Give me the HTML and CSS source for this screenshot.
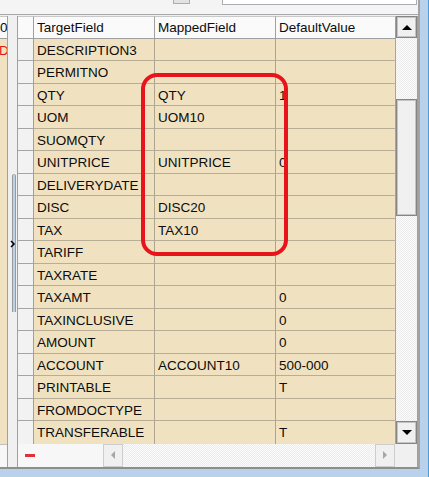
FILE: index.html
```html
<!DOCTYPE html>
<html>
<head>
<meta charset="utf-8">
<link rel="stylesheet" href="styles.css">
</head>
<body>
<div class="app">
  <div class="topbar">
    <div class="tb-btn"></div>
    <div class="tb-input"></div>
  </div>
  <div class="main">
    <div class="leftpanel">
      <div class="lp-head"><span>0</span></div>
      <div class="lp-body"><div class="lp-row">D</div></div>
      <div class="lp-foot"></div>
    </div>
    <div class="splitter">
      <div class="grip"></div>
      <svg class="chev" width="6" height="8" viewBox="0 0 6 8"><polyline points="1,1 4,4 1,7" fill="none" stroke="#000" stroke-width="1.6"/></svg>
    </div>
    <div class="gridwrap">
      <div class="gridarea">
        <div class="grid">
          <div class="row head"><div class="cell ind"></div><div class="cell">TargetField</div><div class="cell">MappedField</div><div class="cell">DefaultValue</div></div>
          <div class="row"><div class="cell ind"></div><div class="cell">DESCRIPTION3</div><div class="cell"></div><div class="cell"></div></div>
          <div class="row"><div class="cell ind"></div><div class="cell">PERMITNO</div><div class="cell"></div><div class="cell"></div></div>
          <div class="row"><div class="cell ind"></div><div class="cell">QTY</div><div class="cell">QTY</div><div class="cell">1</div></div>
          <div class="row"><div class="cell ind"></div><div class="cell">UOM</div><div class="cell">UOM10</div><div class="cell"></div></div>
          <div class="row"><div class="cell ind"></div><div class="cell">SUOMQTY</div><div class="cell"></div><div class="cell"></div></div>
          <div class="row"><div class="cell ind"></div><div class="cell">UNITPRICE</div><div class="cell">UNITPRICE</div><div class="cell">0</div></div>
          <div class="row"><div class="cell ind"></div><div class="cell">DELIVERYDATE</div><div class="cell"></div><div class="cell"></div></div>
          <div class="row"><div class="cell ind"></div><div class="cell">DISC</div><div class="cell">DISC20</div><div class="cell"></div></div>
          <div class="row"><div class="cell ind"></div><div class="cell">TAX</div><div class="cell">TAX10</div><div class="cell"></div></div>
          <div class="row"><div class="cell ind"></div><div class="cell">TARIFF</div><div class="cell"></div><div class="cell"></div></div>
          <div class="row"><div class="cell ind"></div><div class="cell">TAXRATE</div><div class="cell"></div><div class="cell"></div></div>
          <div class="row"><div class="cell ind"></div><div class="cell">TAXAMT</div><div class="cell"></div><div class="cell">0</div></div>
          <div class="row"><div class="cell ind"></div><div class="cell">TAXINCLUSIVE</div><div class="cell"></div><div class="cell">0</div></div>
          <div class="row"><div class="cell ind"></div><div class="cell">AMOUNT</div><div class="cell"></div><div class="cell">0</div></div>
          <div class="row"><div class="cell ind"></div><div class="cell">ACCOUNT</div><div class="cell">ACCOUNT10</div><div class="cell">500-000</div></div>
          <div class="row"><div class="cell ind"></div><div class="cell">PRINTABLE</div><div class="cell"></div><div class="cell">T</div></div>
          <div class="row"><div class="cell ind"></div><div class="cell">FROMDOCTYPE</div><div class="cell"></div><div class="cell"></div></div>
          <div class="row"><div class="cell ind"></div><div class="cell">TRANSFERABLE</div><div class="cell"></div><div class="cell">T</div></div>
        </div>
        <div class="vscroll">
          <div class="sbtn"><span class="tri-up"></span></div>
          <div class="thumb"></div>
          <div class="vtrack"></div>
          <div class="sbtn down"><span class="tri-down"></span></div>
        </div>
      </div>
      <div class="hbar">
        <div class="nav"><span class="minus"></span></div>
        <div class="hbtn"><span class="tri-left"></span></div>
        <div class="htrack"></div>
        <div class="hbtn"><span class="tri-right"></span></div>
        <div class="corner"></div>
      </div>
    </div>
  </div>
</div>
<div class="redbox"></div>
</body>
</html>
```

FILE: styles.css
```css
* { box-sizing: border-box; }
html, body { margin: 0; padding: 0; }
body {
  width: 429px;
  height: 477px;
  overflow: hidden;
  position: relative;
  background: #b9d1ea;
  border-right: 1px solid #4f9ad4;
  font-family: "Liberation Sans", Arial, sans-serif;
  font-size: 13.5px;
  color: #0c0c0c;
}
.app {
  width: 420px;
  height: 469px;
  background: #f0f0f0;
  border-right: 2px solid #a3a3a3;
  border-bottom: 2px solid #8e8e8e;
  display: flex;
  flex-direction: column;
}
.topbar {
  height: 15px;
  border-bottom: 1px solid #a8a8a8;
  display: flex;
  align-items: flex-start;
  background: #f4f4f4;
}
.tb-btn {
  margin-left: 173px;
  width: 17px;
  height: 4px;
  background: #e3e3e3;
  border: 1px solid #adadad;
  border-top: none;
}
.tb-input {
  margin-left: 32px;
  width: 195px;
  height: 5px;
  background: #fff;
  border: 1px solid #abadb3;
  border-top: none;
}
.main {
  height: 452px;
  padding-top: 1px;
  display: flex;
}
.leftpanel {
  width: 8px;
  border-right: 1px solid #a0a0a0;
  display: flex;
  flex-direction: column;
  overflow: hidden;
}
.lp-head {
  height: 22.5px;
  background: #fafafa;
  border-bottom: 1px solid #a0a0a0;
  border-top: 1px solid #c8c8c8;
  line-height: 22px;
  text-align: right;
}
.lp-body {
  flex: 1;
  background: #f0e2c1;
}
.lp-row {
  height: 22.5px;
  line-height: 24px;
  color: #e0141e;
  white-space: nowrap;
  margin-left: -1px;
}
.lp-foot {
  height: 23.5px;
  background: #f7f7f7;
  border-top: 1px solid #c0c0c0;
}
.splitter {
  width: 9px;
  position: relative;
  background: #f0f0f0;
}
.grip {
  position: absolute;
  left: 4px;
  top: 158px;
  width: 4px;
  height: 138px;
  border-left: 1px solid #9a9a9a;
  border-right: 1px solid #9a9a9a;
  border-top: 1px solid #b0b0b0;
  border-radius: 2px 2px 0 0;
  background: #bcd2e8;
}
.chev {
  position: absolute;
  left: 2px;
  top: 224px;
}
.gridwrap {
  width: 401px;
  border-left: 1px solid #a0a0a0;
  border-right: 1px solid #a0a0a0;
  display: flex;
  flex-direction: column;
}
.gridarea {
  height: 427.5px;
  display: flex;
}
.grid {
  width: 378px;
}
.row {
  display: grid;
  grid-template-columns: 16px 121px 121px 120px;
  height: 22.5px;
}
.cell {
  background: #f0e2c1;
  border-right: 1px solid #aca58f;
  border-bottom: 1px solid #b8ad95;
  padding-left: 3px;
  line-height: 24px;
  white-space: nowrap;
  overflow: hidden;
}
.cell.ind {
  background: #f2f2f2;
  border-bottom-color: #a5a5a5;
  border-right-color: #a0a0a0;
}
.row:last-child .cell { border-bottom: none; }
.row.head .cell {
  background: #fafafa;
  border-right-color: #a0a0a0;
  border-bottom-color: #a0a0a0;
  border-top: 1px solid #c8c8c8;
  line-height: 21px;
}
.vscroll {
  width: 21px;
  display: flex;
  flex-direction: column;
  background: repeating-conic-gradient(#fbfbfb 0 25%, #ececec 0 50%) 0 0 / 2px 2px;
}
.sbtn {
  height: 22px;
  background: #f0f0f0;
  border: 1px solid #858585;
  box-shadow: inset 0 0 0 1px #c4c4c4;
  display: flex;
  align-items: center;
  justify-content: center;
}
.sbtn.down { height: 22.5px; }
.tri-up {
  width: 0; height: 0;
  border-left: 5px solid transparent;
  border-right: 5px solid transparent;
  border-bottom: 5px solid #000;
}
.tri-down {
  width: 0; height: 0;
  border-left: 5px solid transparent;
  border-right: 5px solid transparent;
  border-top: 5px solid #000;
}
.thumb {
  margin-top: 61px;
  height: 117px;
  background: #f0f0f0;
  border: 1px solid #858585;
  box-shadow: inset 0 0 0 1px #c4c4c4;
}
.vtrack { flex: 1; }
.hbar {
  height: 23.5px;
  display: flex;
}
.nav {
  width: 85px;
  background: #f7f7f7;
  position: relative;
}
.minus {
  position: absolute;
  left: 7px;
  top: 10px;
  width: 10px;
  height: 3px;
  background: #e0303c;
}
.hbtn {
  width: 20px;
  background: #f0f0f0;
  border: 1px solid #cdcdcd;
  display: flex;
  align-items: center;
  justify-content: center;
}
.tri-left {
  width: 0; height: 0;
  border-top: 4px solid transparent;
  border-bottom: 4px solid transparent;
  border-right: 4px solid #a6a6a6;
}
.tri-right {
  width: 0; height: 0;
  border-top: 4px solid transparent;
  border-bottom: 4px solid transparent;
  border-left: 4px solid #a6a6a6;
}
.htrack {
  flex: 1;
  background: repeating-conic-gradient(#fbfbfb 0 25%, #ececec 0 50%) 0 0 / 2px 2px;
}
.corner {
  width: 22px;
  background: #f0f0f0;
}
.redbox {
  position: absolute;
  left: 141px;
  top: 73px;
  width: 147px;
  height: 183px;
  border: 4px solid #e8141c;
  border-radius: 16px;
}
```
